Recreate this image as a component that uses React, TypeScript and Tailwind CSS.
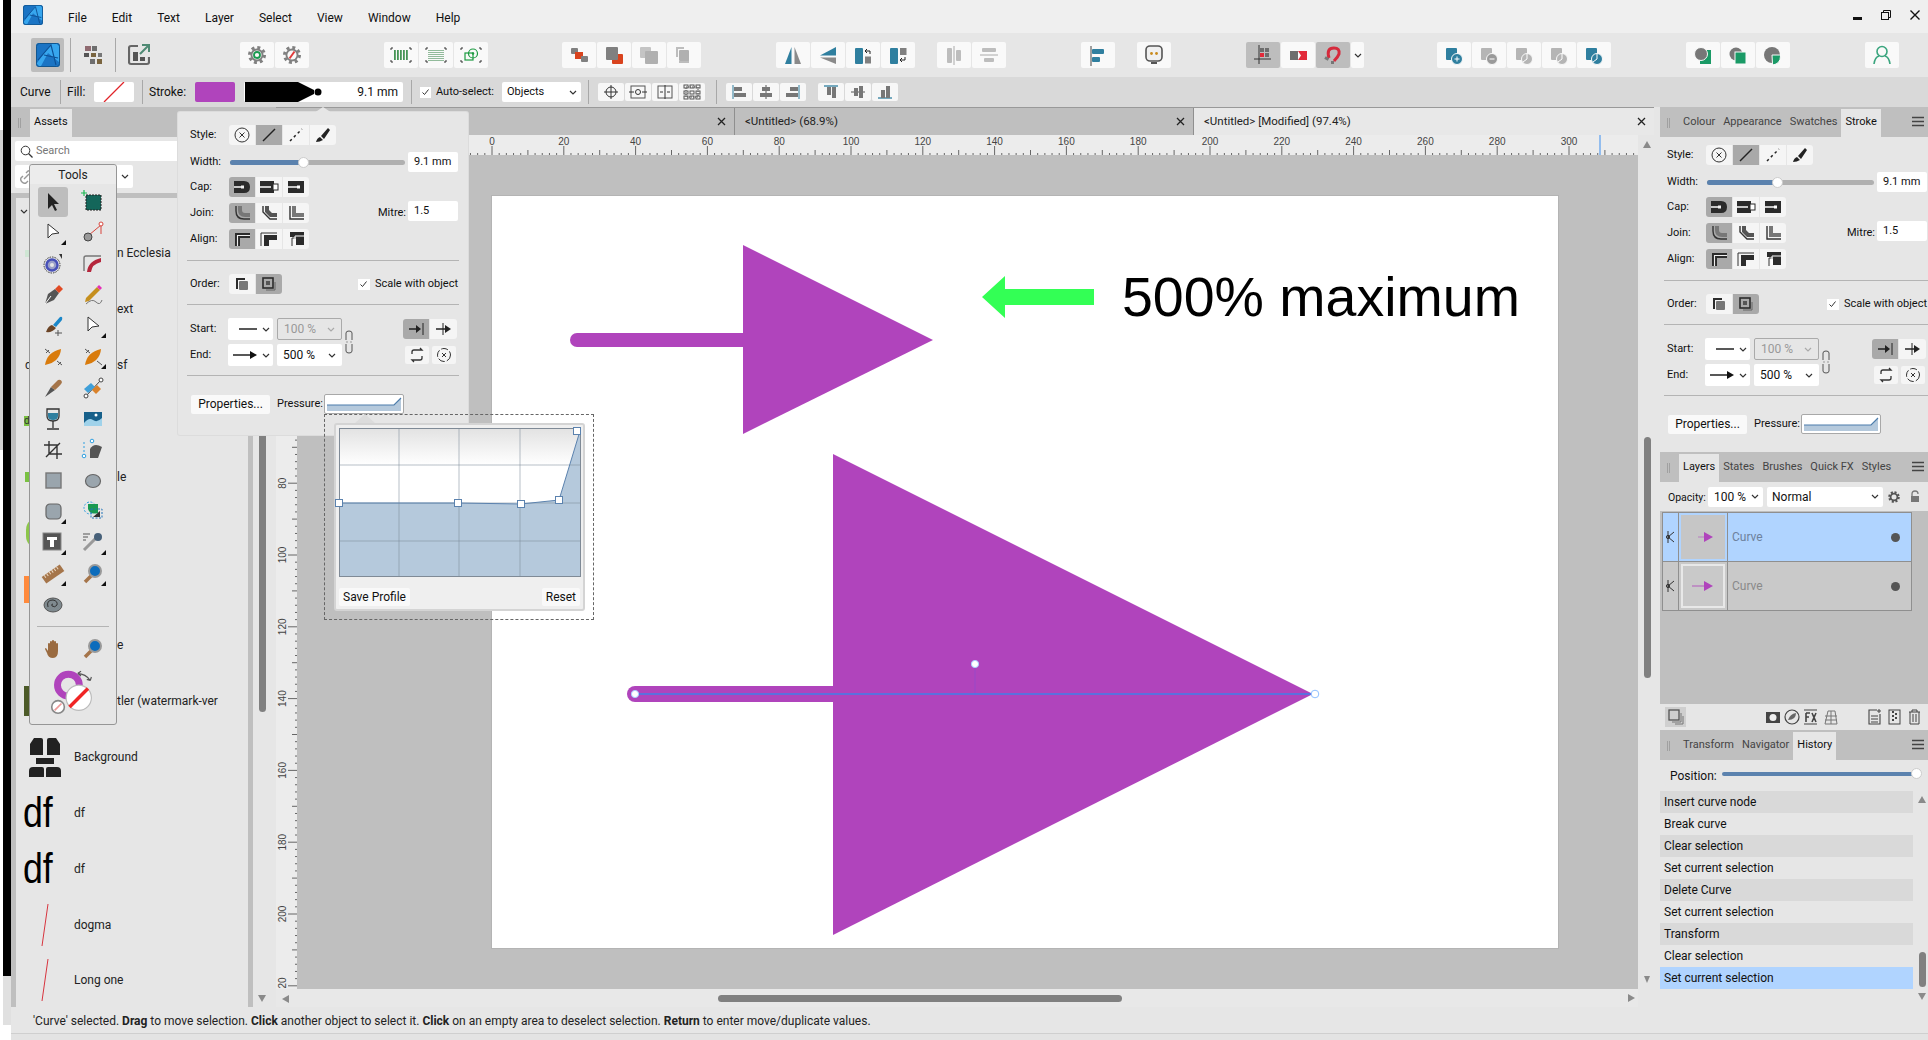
import React from 'react';

const PURPLE = '#b044bc';
const TEAL = '#2f7f9f';
const GRN = '#1a9a66';
const ORG = '#d9431e';

const Svg: React.FC<{ w?: number; h?: number; children?: React.ReactNode }> = ({ w = 34, h = 26, children }) => (
  <svg width={w} height={h} viewBox={`0 0 ${w} ${h}`} className="block shrink-0">{children}</svg>
);

const Chev: React.FC<{ c?: string }> = ({ c = '#333' }) => (
  <svg width="8" height="5" viewBox="0 0 8 5" className="block shrink-0"><path d="M1 1l3 3 3-3" fill="none" stroke={c} strokeWidth="1.2" /></svg>
);

const Logo: React.FC<{ s: number }> = ({ s }) => (
  <svg width={s} height={s} viewBox="0 0 24 24" className="block shrink-0">
    <rect width="24" height="24" rx="3" fill="#1b74c4" />
    <path d="M1 20 L15 1 H21 Q23 1 23 3 V19 L12 10 L5 23 H3 Q1 23 1 21Z" fill="#37a6ee" />
    <path d="M2 17 L15 2 L20 22 M8 12 L22 15" fill="none" stroke="#0d4f94" strokeWidth="1.1" />
    <rect x="0.5" y="0.5" width="23" height="23" rx="3" fill="none" stroke="#12568f" />
  </svg>
);

const Brackets = () => (
  <path d="M9 6H7V8 M25 6h2v2 M9 20H7v-2 M25 20h2v-2" fill="none" stroke="#333" strokeWidth="1" />
);

const Gear: React.FC = () => (
  <g>
    <circle cx="17" cy="13" r="7.5" fill="none" stroke="#808080" strokeWidth="3" strokeDasharray="3 2.9" />
    <circle cx="17" cy="13" r="6.5" fill="#808080" />
    <circle cx="17" cy="13" r="4.6" fill="#f9f9f9" />
  </g>
);

const tb: React.ReactNode[] = [
  <><Gear /><circle cx="17" cy="13" r="3" fill="none" stroke="#1a9a50" strokeWidth="1.8" /></>,
  <><Gear /><path d="M14.5 16.5l5-7" stroke="#e03a3a" strokeWidth="2" /></>,
  <><Brackets />{[11, 14, 17, 20, 23].flatMap(x => [9, 11, 13, 15, 17].map(y => <rect key={`${x}${y}`} x={x - 1} y={y - 0.8} width="1.8" height="1.6" fill="#1b7d2e" />))}</>,
  <><Brackets />{[10, 12, 14, 16, 18, 20, 22, 24].flatMap(x => [8, 10, 12, 14, 16, 18].map(y => <rect key={`${x}${y}`} x={x - 0.5} y={y} width="1" height="1" fill="#2a7d3c" />))}</>,
  <><Brackets /><circle cx="19" cy="11.5" r="4.5" fill="none" stroke="#1b9a40" strokeWidth="1.2" /><rect x="11" y="11" width="8" height="7" fill="none" stroke="#1b9a40" strokeWidth="1.2" /><circle cx="19" cy="11.5" r="1.2" fill="#1b9a40" /></>,
  <><rect x="9" y="6" width="7" height="6" rx="1" fill="#808080" /><rect x="13" y="10" width="8" height="7" fill={ORG} /><rect x="19" y="14" width="7" height="6" rx="1" fill="#808080" /></>,
  <><rect x="15" y="12" width="11" height="10" rx="1" fill={ORG} /><rect x="9" y="5" width="12" height="13" rx="1" fill="#808080" /></>,
  <><rect x="8" y="5" width="11" height="11" rx="1" fill="#c4c4c4" /><rect x="13" y="9" width="13" height="13" rx="1" fill="#b0b0b0" /></>,
  <><path d="M9 5h8v2h-6v8H9z M19 11h3v10H12v-2h8z" fill="#bdbdbd" /><rect x="12" y="8" width="10" height="11" rx="1" fill="#b0b0b0" /></>,
  <><path d="M15.5 5v17H9z" fill={TEAL} /><path d="M18.5 5v17H25z" fill="#8a8a8a" /></>,
  <><path d="M25 5v8.5H9z" fill={TEAL} /><path d="M25 22v-6.5H9z" fill="#8a8a8a" /></>,
  <><rect x="9" y="6" width="8" height="16" rx="1" fill={TEAL} /><rect x="19" y="14.5" width="6" height="7" fill="#808080" /><path d="M21 7l-2 2 2 2 M19 9h5v3" fill="none" stroke="#222" strokeWidth="1" /></>,
  <><rect x="9" y="6" width="8" height="16" rx="1" fill={TEAL} /><rect x="19" y="6" width="6.5" height="7" fill="#808080" /><path d="M21 20l-2-2 2-2 M19 18h5v-3" fill="none" stroke="#222" strokeWidth="1" /></>,
  <><rect x="10" y="6" width="5" height="15" rx="1" fill="#bdbdbd" /><rect x="19" y="8" width="5" height="11" rx="1" fill="#bdbdbd" /><path d="M17 4v19" stroke="#aaa" /></>,
  <><rect x="10" y="6" width="14" height="4" rx="1" fill="#bdbdbd" /><rect x="12" y="16" width="10" height="4" rx="1" fill="#bdbdbd" /><path d="M8 13h18" stroke="#aaa" /></>,
  <><path d="M10 4v20" stroke="#444" /><rect x="11" y="7" width="12" height="5" rx="1" fill={TEAL} /><rect x="11" y="15" width="8" height="5" rx="1" fill={TEAL} /></>,
  <><rect x="9" y="4" width="16" height="15" rx="4" fill="#f0f0f0" stroke="#555" strokeWidth="1.6" /><circle cx="14.5" cy="11.5" r="1.4" fill="#c98a1c" /><circle cx="19.5" cy="11.5" r="1.4" fill="#c98a1c" /><rect x="14" y="20" width="6" height="2" fill="#555" /></>,
  <><rect x="14" y="6" width="4" height="4" fill="#6e6e6e" /><rect x="19" y="6" width="4" height="4" fill="#6e6e6e" /><rect x="14" y="11" width="4" height="4" fill="#e22a3a" /><rect x="19" y="11" width="4" height="4" fill="#6e6e6e" /><path d="M13 3v19 M8 17h17" stroke="#333" /></>,
  <><rect x="9" y="9" width="8" height="9" fill="#6e6e6e" /><path d="M17 9h9v9h-9l3-4.5z" fill="#e22a3a" /></>,
  <><path d="M13 16 Q10 6 18 6 Q24 6 23 12 Q22 15 18 19" fill="none" stroke="#d62a3c" strokeWidth="3" /><rect x="9" y="15" width="4" height="3" fill="#777" transform="rotate(30 11 16)" /><rect x="15" y="19" width="3" height="3" fill="#777" /></>,
];

const bool = (c1: string, c2: string, mark: React.ReactNode): React.ReactNode => (
  <><rect x="9" y="6" width="11" height="12" rx="1" fill={c1} /><circle cx="20" cy="17" r="5.5" fill={c2} stroke="#f9f9f9" />{mark}</>
);

const tb2: React.ReactNode[] = [
  bool(TEAL, TEAL, <path d="M17.5 17h5 M20 14.5v5" stroke="#fff" />),
  bool('#b5b5b5', '#9a9a9a', <path d="M17.5 17h5" stroke="#fff" />),
  bool('#b5b5b5', '#b5b5b5', <path d="M20 12v5l-4 3" fill="none" stroke="#fff" />),
  bool('#b5b5b5', '#b5b5b5', <path d="M20 12v5l-4 3" fill="none" stroke="#fff" />),
  bool(TEAL, TEAL, <path d="M20 12v5l-4 3" fill="none" stroke="#fff" />),
  <><path d="M18 8h7v14H14v-3z" fill={GRN} /><circle cx="15" cy="12" r="6.5" fill="#777" stroke="#f9f9f9" /></>,
  <><circle cx="15" cy="12" r="6.5" fill="#777" /><rect x="14" y="10" width="11" height="12" fill={GRN} stroke="#f9f9f9" /></>,
  <><circle cx="16" cy="13" r="8" fill="#777" /><path d="M16 13h8.5v1q0 8-8 9v-1z" fill={GRN} stroke="#f9f9f9" /></>,
];

const Btn: React.FC<{ on?: boolean; children?: React.ReactNode }> = ({ on, children }) => (
  <div className={`w-[34px] h-[26px] rounded-[2px] flex items-center justify-center ${on ? 'bg-[#bdbdbd]' : 'bg-[#f9f9f9]'}`}>
    <Svg>{children}</Svg>
  </div>
);

const Sep: React.FC<{ className?: string }> = ({ className }) => <div className={`w-px bg-[#a8a8a8] shrink-0 ${className}`} />;

const Toolbar = () => (
  <div className="h-[44px] bg-[#e6e6e6] flex items-center pl-[20px] shrink-0">
    <div className="w-[33px] h-[34px] bg-[#bdbdbd] rounded-[2px] flex items-center justify-center"><Logo s={24} /></div>
    <Sep className="h-[34px] ml-[6px]" />
    <div className="w-[44px] flex justify-center">
      <svg width="20" height="20" viewBox="0 0 20 20" className="block">
        <rect x="2" y="1" width="6" height="5" fill="#8f6a70" /><rect x="9" y="1" width="5" height="5" fill="#6e6e6e" />
        <rect x="1" y="8" width="5" height="4" fill="#555" /><rect x="8" y="8" width="5" height="4" fill="#7a6540" /><rect x="15" y="8" width="4" height="4" fill="#777" />
        <rect x="7" y="14" width="5" height="5" fill="#6e6e6e" /><rect x="14" y="14" width="5" height="5" fill="#7a6540" />
      </svg>
    </div>
    <Sep className="h-[34px]" />
    <div className="w-[46px] flex justify-center">
      <svg width="22" height="22" viewBox="0 0 22 22" className="block">
        <path d="M10 2H3Q1 2 1 4V18Q1 20 3 20H19Q21 20 21 18V13" fill="none" stroke="#666" strokeWidth="2.2" />
        <rect x="5" y="8" width="5" height="9" fill="#555" /><rect x="12" y="13" width="5" height="4" fill="#555" />
        <path d="M12 10L20 2M14 1h7v7" fill="none" stroke="#4f8a74" strokeWidth="2" />
      </svg>
    </div>
    <div className="flex gap-px ml-[78px]"><Btn>{tb[0]}</Btn><Btn>{tb[1]}</Btn></div>
    <div className="flex gap-px ml-[75px]"><Btn>{tb[2]}</Btn><Btn>{tb[3]}</Btn><Btn>{tb[4]}</Btn></div>
    <div className="flex gap-px ml-[74px]"><Btn>{tb[5]}</Btn><Btn>{tb[6]}</Btn><Btn>{tb[7]}</Btn><Btn>{tb[8]}</Btn></div>
    <div className="flex gap-px ml-[75px]"><Btn>{tb[9]}</Btn><Btn>{tb[10]}</Btn><Btn>{tb[11]}</Btn><Btn>{tb[12]}</Btn></div>
    <div className="flex gap-px ml-[22px]"><Btn>{tb[13]}</Btn><Btn>{tb[14]}</Btn></div>
    <div className="ml-[75px]"><Btn>{tb[15]}</Btn></div>
    <div className="ml-[22px]"><Btn>{tb[16]}</Btn></div>
    <div className="flex gap-px ml-[75px]">
      <Btn on>{tb[17]}</Btn><Btn>{tb[18]}</Btn><Btn on>{tb[19]}</Btn>
      <div className="w-[13px] h-[26px] bg-[#f9f9f9] rounded-[2px] flex items-center justify-center"><Chev /></div>
    </div>
    <div className="flex gap-px ml-[73px]">{tb2.slice(0, 5).map((n, i) => <Btn key={i}>{n}</Btn>)}</div>
    <div className="flex gap-px ml-[75px]">{tb2.slice(5).map((n, i) => <Btn key={i}>{n}</Btn>)}</div>
    <div className="ml-[75px]">
      <Btn><circle cx="17" cy="9.5" r="5" fill="none" stroke="#3aa57e" strokeWidth="1.6" /><path d="M9 22 Q10 15 14 14 M25 22 Q24 15 20 14" fill="none" stroke="#3aa57e" strokeWidth="1.6" /></Btn>
    </div>
  </div>
);

const sm: React.ReactNode[] = [
  <><circle cx="13" cy="9" r="5" fill="none" stroke="#333" /><path d="M13 2v14M6 9h14" stroke="#333" /></>,
  <><rect x="6" y="3" width="14" height="12" fill="none" stroke="#555" /><circle cx="13" cy="9" r="2.5" fill="none" stroke="#333" /><path d="M4 9h5M17 9h5" stroke="#333" /></>,
  <><rect x="6" y="3" width="14" height="12" fill="none" stroke="#555" /><path d="M13 2v14 M8 9l3 0 M18 9h-3" stroke="#333" /></>,
  <>{[5, 11, 17].flatMap(x => [2, 8, 13].map(y => <rect key={`${x}${y}`} x={x} y={y} width="4" height="3" fill="none" stroke="#555" />))}<rect x="7" y="4" width="12" height="10" fill="none" stroke="#555" strokeDasharray="1 1" /></>,
  <><path d="M7 2v14" stroke={TEAL} /><rect x="8" y="4" width="8" height="4" fill="#777" /><rect x="8" y="10" width="12" height="4" fill="#777" /></>,
  <><path d="M13 2v14" stroke="#555" /><rect x="9" y="4" width="8" height="4" fill="#777" /><rect x="7" y="10" width="12" height="4" fill="#777" /></>,
  <><path d="M19 2v14" stroke={TEAL} /><rect x="10" y="4" width="8" height="4" fill="#777" /><rect x="6" y="10" width="12" height="4" fill="#777" /></>,
  <><path d="M6 3h14" stroke={TEAL} strokeWidth="1.3" /><rect x="9" y="4" width="4" height="8" fill="#777" /><rect x="14" y="4" width="4" height="11" fill="#777" /></>,
  <><path d="M6 9h14" stroke="#555" /><rect x="9" y="5" width="4" height="8" fill="#777" /><rect x="14" y="3" width="4" height="12" fill="#777" /></>,
  <><path d="M6 15h14" stroke={TEAL} strokeWidth="1.3" /><rect x="9" y="7" width="4" height="8" fill="#777" /><rect x="14" y="3" width="4" height="12" fill="#777" /></>,
];

const SmBtn: React.FC<{ n: React.ReactNode }> = ({ n }) => (
  <div className="w-[26px] h-[18px] bg-[#f7f7f7] rounded-[2px]"><Svg w={26} h={18}>{n}</Svg></div>
);

const ContextBar = () => (
  <div className="h-[30px] bg-[#d9d9d9] flex items-center pl-[9px] text-[12px] shrink-0">
    <span className="w-[30px]">Curve</span>
    <Sep className="h-[24px] ml-[10px]" />
    <span className="w-[27px] ml-[6px]">Fill:</span>
    <div className="w-[40px] h-[20px] bg-white rounded-[2px] overflow-hidden"><Svg w={40} h={20}><path d="M10 20L30 0" stroke="#e1242a" strokeWidth="1.3" /></Svg></div>
    <Sep className="h-[24px] ml-[8px]" />
    <span className="w-[46px] ml-[6px]">Stroke:</span>
    <div className="w-[40px] h-[20px] rounded-[2px] bg-[#b044bc]" />
    <div className="w-[159px] h-[20px] ml-[9px] bg-white rounded-[2px] relative flex items-center justify-end pr-[5px]">
      <div className="absolute left-0 top-0"><Svg w={80} h={20}><path d="M1 0H54L70 8V12L54 20H1Z" fill="#000" /><circle cx="74" cy="10" r="3.5" fill="#000" /></Svg></div>
      <span>9.1 mm</span>
    </div>
    <Sep className="h-[24px] ml-[8px]" />
    <div className="w-[11px] h-[11px] ml-[8px] bg-white flex items-center justify-center"><Svg w={9} h={9}><path d="M1.5 4.5l2 2 4-5" fill="none" stroke="#333" /></Svg></div>
    <span className="w-[66px] ml-[5px] text-[11px]">Auto-select:</span>
    <div className="w-[79px] h-[20px] bg-white rounded-[2px] flex items-center justify-between pl-[5px] pr-[4px] text-[11px]"><span>Objects</span><Chev /></div>
    <Sep className="h-[24px] ml-[7px]" />
    <div className="flex gap-px ml-[9px]">{sm.slice(0, 4).map((n, i) => <SmBtn key={i} n={n} />)}</div>
    <Sep className="h-[24px] ml-[11px]" />
    <div className="flex gap-px ml-[9px]">{sm.slice(4, 7).map((n, i) => <SmBtn key={i} n={n} />)}</div>
    <div className="flex gap-px ml-[12px]">{sm.slice(7).map((n, i) => <SmBtn key={i} n={n} />)}</div>
  </div>
);

const Grip = () => <div className="w-[3px] h-[10px] border-x border-[#a0a0a0] shrink-0" />;

const PanelHead: React.FC<{ tabs: string[]; active: string; menu?: boolean }> = ({ tabs, active, menu = true }) => (
  <div className="h-[30px] bg-[#bfbfbf] flex items-end pl-[7px] pr-[4px] text-[11px] text-[#444] shrink-0 relative whitespace-nowrap">
    <div className="h-[28px] flex items-center w-[12px]"><Grip /></div>
    {tabs.map(t => (
      <div key={t} className={`h-[28px] px-[4px] pb-[2px] flex items-center ${t === active ? 'bg-[#e6e6e6] text-[#111]' : ''}`}>{t}</div>
    ))}
    {menu && (
      <div className="ml-auto h-[28px] flex items-center pb-[3px]">
        <Svg w={12} h={11}><path d="M0 1.5h12M0 5.5h12M0 9.5h12" stroke="#444" strokeWidth="1.6" /></Svg>
      </div>
    )}
  </div>
);

const Seg: React.FC<{ items: React.ReactNode[]; on: number }> = ({ items, on }) => (
  <div className="flex gap-px">
    {items.map((n, i) => (
      <div key={i} className={`w-[26px] h-[20px] ${i === 0 ? 'rounded-l-[3px]' : ''} ${i === items.length - 1 ? 'rounded-r-[3px]' : ''} ${i === on ? 'bg-[#a9a9a9]' : 'bg-[#f5f5f5]'}`}>
        <Svg w={26} h={20}>{n}</Svg>
      </div>
    ))}
  </div>
);

const styleIcons: React.ReactNode[] = [
  <><circle cx="13" cy="10" r="7" fill="none" stroke="#333" /><path d="M10.5 7.5l5 5m0-5l-5 5" stroke="#333" /></>,
  <path d="M7 16L19 4" stroke="#222" strokeWidth="1.5" />,
  <path d="M7 16L19 4" stroke="#222" strokeWidth="1.5" strokeDasharray="2.5 3" />,
  <><path d="M6 17Q7 13 10 12L13 15Q10 17 6 17Z M11 11L18 3L20 5L14 14Z" fill="#222" /></>,
];
const capIcons: React.ReactNode[] = [
  <><path d="M5 4H15Q21 4 21 10T15 16H5Z" fill="#2b2b2b" /><path d="M5 10H14" stroke="#f0f0f0" strokeWidth="1.6" /><rect x="12" y="8.5" width="3" height="3" fill="#f0f0f0" /></>,
  <><path d="M4 4H18V16H4Z" fill="#2b2b2b" /><path d="M4 10H15" stroke="#fff" strokeWidth="1.5" /><rect x="17" y="7" width="5" height="6" fill="#fff" stroke="#2b2b2b" /></>,
  <><path d="M5 4H21V16H5Z" fill="#2b2b2b" /><path d="M5 10H16" stroke="#fff" strokeWidth="1.5" /><rect x="14" y="8.5" width="3" height="3" fill="#fff" /></>,
];
const joinIcons: React.ReactNode[] = [
  <><path d="M7 3V8Q7 16 15 16H21" fill="none" stroke="#333" strokeWidth="1.4" /><path d="M9 3H13V7Q13 10 16 10H21V14H16Q9 14 9 7Z" fill="#777" /></>,
  <><path d="M7 3V9L14 16H21" fill="none" stroke="#333" strokeWidth="1.4" /><path d="M9 3H13V7L16 10H21V14H14L9 9Z" fill="#555" /></>,
  <><path d="M7 3V16H21" fill="none" stroke="#333" strokeWidth="1.4" /><path d="M9 3H13V10H21V14H9Z" fill="#777" /></>,
];
const alignIcons: React.ReactNode[] = [
  <><path d="M6 4H21V9H11V17H6Z" fill="#2b2b2b" /><path d="M8.5 17V6.5H21" fill="none" stroke="#eee" strokeWidth="1.1" /></>,
  <><path d="M5 4H21 M5 4V17" stroke="#333" fill="none" /><path d="M8 6H21V11H13V17H8Z" fill="#2b2b2b" /></>,
  <><path d="M7 3H21V16H13V8H7Z M7 9V17" fill="#2b2b2b" /><path d="M9 17V9H14" fill="none" stroke="#333" /><path d="M12 16V7H21" fill="none" stroke="#fff" strokeWidth="1" /></>,
];
const orderIcons: React.ReactNode[] = [
  <><path d="M7 4H16V6H9V15H7Z" fill="#2b2b2b" /><rect x="10" y="7" width="9" height="9" rx="1" fill="#777" /></>,
  <><rect x="7" y="4" width="10" height="10" fill="none" stroke="#2b2b2b" strokeWidth="1.6" /><rect x="10" y="7" width="4" height="4" fill="#555" /><path d="M19 8V16H10" fill="none" stroke="#666" /></>,
];

const Arrow: React.FC<{ head?: boolean }> = ({ head }) => (
  <Svg w={34} h={22}>
    {head ? <><path d="M5 11H23" stroke="#111" strokeWidth="1.4" /><path d="M22 7L29 11L22 15Z" fill="#111" /></> : <path d="M11 11H29" stroke="#111" strokeWidth="1.4" />}
  </Svg>
);

const Field: React.FC<{ children?: React.ReactNode; className?: string }> = ({ children, className }) => (
  <div className={`w-[50px] h-[20px] bg-white rounded-[2px] flex items-center pl-[6px] ${className ?? ''}`}>{children}</div>
);

const Label: React.FC<{ children?: React.ReactNode }> = ({ children }) => (
  <span className="w-[42px] pl-[3px] shrink-0">{children}</span>
);

const Hr: React.FC<{ className?: string }> = ({ className }) => <div className={`h-px bg-[#b4b4b4] ${className}`} />;

const Pressure = () => (
  <div className="w-[80px] h-[20px] bg-white border border-[#a8a8a8] rounded-[2px]">
    <Svg w={78} h={18}>
      <path d="M2 10H69L76 3V16H2Z" fill="#b5c9dc" /><path d="M2 10H69L76 3" fill="none" stroke="#4d7dab" strokeWidth="1.2" />
    </Svg>
  </div>
);

// same controls are shown docked on the right and in the popover
const StrokePanel = () => (
  <div className="flex flex-col text-[11px] whitespace-nowrap">
    <div className="flex items-center h-[20px]"><Label>Style:</Label><Seg items={styleIcons} on={1} /></div>
    <div className="flex items-center h-[20px] mt-[7px]">
      <Label>Width:</Label>
      <div className="flex-1 h-[5px] bg-[#b0b0b0] rounded-full relative ml-px">
        <div className="w-[41.7%] h-full bg-[#5b82ae] rounded-l-full" />
        <div className="absolute left-[41.7%] top-[-3px] w-[11px] h-[11px] -ml-[5px] rounded-full bg-white border border-[#ccc]" />
      </div>
      <Field className="ml-[3px] mr-px">9.1 mm</Field>
    </div>
    <div className="flex items-center h-[20px] mt-[5px]"><Label>Cap:</Label><Seg items={capIcons} on={0} /></div>
    <div className="flex items-center h-[20px] mt-[6px]">
      <Label>Join:</Label><Seg items={joinIcons} on={0} />
      <span className="ml-auto mr-[2px]">Mitre:</span>
      <Field className="mr-px -translate-y-[2px]">1.5</Field>
    </div>
    <div className="flex items-center h-[20px] mt-[6px]"><Label>Align:</Label><Seg items={alignIcons} on={0} /></div>
    <Hr className="mt-[11px]" />
    <div className="flex items-center h-[20px] mt-[13px]">
      <Label>Order:</Label><Seg items={orderIcons} on={1} />
      <div className="ml-auto w-[12px] h-[11px] bg-white flex items-center justify-center"><Svg w={9} h={9}><path d="M1.5 4.5l2 2 4-5" fill="none" stroke="#333" /></Svg></div>
      <span className="ml-[5px] mr-px">Scale with object</span>
    </div>
    <Hr className="mt-[10px]" />
    <div className="flex mt-[13px] h-[48px]">
      <div className="flex flex-col gap-[4px]">
        <div className="flex items-center h-[22px]">
          <span className="w-[41px] pl-[3px]">Start:</span>
          <div className="w-[45px] h-[22px] bg-white rounded-[2px] flex items-center"><Arrow /><Chev /></div>
          <div className="w-[65px] h-[22px] ml-[4px] border border-[#aaa] rounded-[2px] flex items-center justify-between px-[6px] text-[#999] text-[12px]"><span>100 %</span><Chev c="#aaa" /></div>
        </div>
        <div className="flex items-center h-[22px]">
          <span className="w-[41px] pl-[3px]">End:</span>
          <div className="w-[45px] h-[22px] bg-white rounded-[2px] flex items-center"><Arrow head /><Chev /></div>
          <div className="w-[65px] h-[22px] ml-[4px] bg-white rounded-[2px] flex items-center justify-between px-[6px] text-[12px]"><span>500 %</span><Chev /></div>
        </div>
      </div>
      <div className="ml-[2px] mt-[12px]">
        <Svg w={10} h={24}><path d="M2 10V3Q2 1 5 1T8 3V10M2 14V21Q2 23 5 23T8 21V14" fill="none" stroke="#555" /><path d="M2 12h2M6 12h2" stroke="#999" /></Svg>
      </div>
      <div className="ml-auto mr-[2px] flex flex-col items-end">
        <div className="flex gap-px mt-px">
          <div className="w-[26px] h-[20px] bg-[#a9a9a9] rounded-l-[3px]"><Svg w={26} h={20}><path d="M6 10h10" stroke="#222" strokeWidth="1.5" /><path d="M13 6l5 4-5 4z" fill="#222" /><path d="M20 4v12" stroke="#222" /></Svg></div>
          <div className="w-[27px] h-[20px] bg-[#f5f5f5] rounded-r-[3px]"><Svg w={27} h={20}><path d="M6 10h12" stroke="#222" strokeWidth="1.5" /><path d="M15 6l6 4-6 4z" fill="#222" /><path d="M13 4v12" stroke="#222" /></Svg></div>
        </div>
        <div className="flex gap-[3px] mt-[7px] mr-px">
          <div className="w-[24px] h-[18px] bg-[#f5f5f5] rounded-[2px]"><Svg w={24} h={18}><path d="M7 8V6Q7 4 9 4H17L15 2M17 10V12Q17 14 15 14H7L9 16" fill="none" stroke="#333" strokeWidth="1.3" /></Svg></div>
          <div className="w-[24px] h-[18px] bg-[#f5f5f5] rounded-[2px]"><Svg w={24} h={18}><circle cx="12" cy="9" r="6.5" fill="none" stroke="#333" strokeDasharray="7 2" /><path d="M10 7l4 4m0-4l-4 4" stroke="#333" /></Svg></div>
        </div>
      </div>
    </div>
    <Hr className="mt-[9px]" />
    <div className="flex items-center h-[20px] mt-[18px]">
      <div className="w-[79px] h-[19px] ml-[4px] bg-[#f9f9f9] rounded-[2px] flex items-center justify-center text-[12px]">Properties...</div>
      <span className="ml-[7px] w-[47px]">Pressure:</span>
      <Pressure />
    </div>
  </div>
);

const Thumb: React.FC<{ faint?: boolean }> = ({ faint }) => (
  <Svg w={26} h={16}>
    <path d={faint ? 'M2 8H14' : 'M8 8H14'} stroke={PURPLE} strokeWidth="1.4" opacity={faint ? 0.6 : 0.4} />
    <path d="M14 3L23 8L14 13Z" fill={PURPLE} />
  </Svg>
);

const LayerRow: React.FC<{ on?: boolean }> = ({ on }) => (
  <div className={`h-[49px] flex border-b border-[#8f8f8f] ${on ? 'bg-[#b0d4ff]' : 'bg-[#c9c9c9]'}`}>
    <div className="w-[16px] border-r border-[#8f8f8f] flex items-center justify-center">
      <Svg w={9} h={12}><path d="M2 0v12 M8 1L2 6l6 5" fill="none" stroke="#333" /><circle cx="2" cy="6" r="1.6" fill="none" stroke="#333" /></Svg>
    </div>
    <div className="w-[49px] border-r border-[#8f8f8f] p-[2px] flex">
      <div className={`flex-1 flex items-center justify-center ${on ? 'bg-[#c6c6c6]' : 'bg-[#c9c9c9] border-2 border-[#e8e8e8]'}`}><Thumb faint={!on} /></div>
    </div>
    <div className={`flex-1 flex items-center pl-[4px] text-[12px] ${on ? 'text-[#6d819c]' : 'text-[#8a8a8a]'}`}>Curve</div>
    <div className="w-[9px] h-[9px] rounded-full bg-[#555] self-center mr-[11px]" />
  </div>
);

const history = ['Insert curve node', 'Break curve', 'Clear selection', 'Set current selection', 'Delete Curve', 'Set current selection', 'Transform', 'Clear selection', 'Set current selection'];

const RightPanel = () => (
  <div className="w-[268px] bg-[#e6e6e6] flex flex-col shrink-0 text-[#111]">
    <PanelHead tabs={['Colour', 'Appearance', 'Swatches', 'Stroke']} active="Stroke" />
    <div className="h-[315px] pt-[8px] pl-[4px] shrink-0"><StrokePanel /></div>
    <PanelHead tabs={['Layers', 'States', 'Brushes', 'Quick FX', 'Styles']} active="Layers" />
    <div className="h-[29px] flex items-center pl-[8px] text-[12px] shrink-0">
      <span className="w-[40px] text-[10.5px] pt-[2px]">Opacity:</span>
      <div className="w-[55px] h-[20px] bg-white rounded-[2px] flex items-center justify-between pl-[6px] pr-[4px]"><span>100 %</span><Chev /></div>
      <div className="w-[116px] h-[20px] ml-[4px] bg-white rounded-[2px] flex items-center justify-between pl-[5px] pr-[4px]"><span>Normal</span><Chev /></div>
      <div className="ml-[5px]"><Svg w={12} h={12}><circle cx="6" cy="6" r="4.6" fill="none" stroke="#555" strokeWidth="2.4" strokeDasharray="2 1.6" /><circle cx="6" cy="6" r="3.4" fill="none" stroke="#555" strokeWidth="1.8" /></Svg></div>
      <div className="ml-[10px]"><Svg w={10} h={13}><path d="M2 6V4Q2 1 5 1T8 4" fill="none" stroke="#777" strokeWidth="1.3" /><rect x="1" y="6" width="8" height="6" fill="#777" /></Svg></div>
    </div>
    <div className="h-[193px] bg-[#bfbfbf] pl-[2px] pr-[16px] pt-px shrink-0">
      <div className="border-x border-t border-[#8f8f8f]">
        <LayerRow on />
        <LayerRow />
      </div>
    </div>
    <div className="h-[26px] flex items-center pl-[5px] shrink-0">
      <div className="w-[21px] h-[20px] bg-[#cfcfcf] flex items-center justify-center"><Svg w={16} h={16}><rect x="1" y="1" width="10" height="10" fill="none" stroke="#555" strokeWidth="1.3" /><path d="M13 4V13H4 M15 7V15H7" fill="none" stroke="#777" /></Svg></div>
      <div className="ml-[80px]"><Svg w={14} h={11}><rect width="14" height="11" fill="#444" /><circle cx="7" cy="5.5" r="3.5" fill="#eee" /></Svg></div>
      <div className="ml-[4px]"><Svg w={16} h={16}><circle cx="8" cy="8" r="7" fill="none" stroke="#444" strokeWidth="1.2" /><path d="M4 11Q6 5 12 4Q12 11 4 11Z" fill="#666" /></Svg></div>
      <div className="ml-[4px]"><Svg w={14} h={16}><path d="M0 1h13 M0 15h13" stroke="#444" /><path d="M2 4h4M2 4v9M2 8h3M8 4l4 9M12 4l-4 9" fill="none" stroke="#444" strokeWidth="1.6" /></Svg></div>
      <div className="ml-[6px]"><Svg w={14} h={15}><path d="M4 1h7l2 13H1z M7 1v13 M1 6h12 M1 10h12" fill="none" stroke="#777" /></Svg></div>
      <div className="ml-[30px]"><Svg w={14} h={16}><path d="M9 1H1V15H12V5" fill="none" stroke="#444" strokeWidth="1.1" /><path d="M3 7h7M3 10h7M3 13h7M11 0v4M9 2h4" stroke="#444" /></Svg></div>
      <div className="ml-[6px]"><Svg w={13} h={16}><rect x="1" y="1" width="11" height="14" fill="none" stroke="#444" />{[3, 7, 11].map(y => <rect key={y} x="4" y={y - 1} width="2" height="2" fill="#444" />)}{[5, 9].map(y => <rect key={y} x="7" y={y - 1} width="2" height="2" fill="#444" />)}</Svg></div>
      <div className="ml-[7px]"><Svg w={13} h={16}><path d="M1 3h11M4 3V1h5v2M2 3v12h9V3M5 5v8M8 5v8" fill="none" stroke="#444" /></Svg></div>
    </div>
    <PanelHead tabs={['Transform', 'Navigator', 'History']} active="History" />
    <div className="h-[31px] flex items-center pl-[10px] text-[12px] shrink-0">
      <span className="w-[52px]">Position:</span>
      <div className="w-[192px] h-[4px] bg-[#5b82ae] rounded-full relative -mt-[3px]">
        <div className="absolute right-[-8px] top-[-4px] w-[11px] h-[11px] rounded-full bg-white border border-[#ccc]" />
      </div>
    </div>
    <div className="flex flex-1 min-h-0">
      <div className="w-[253px] text-[12px]">
        {history.map((h, i) => (
          <div key={i} className={`h-[22px] flex items-center pl-[4px] ${i === 8 ? 'bg-[#b0d4ff]' : i % 2 === 0 ? 'bg-[#d9d9d9]' : ''}`}>{h}</div>
        ))}
      </div>
      <div className="flex-1 flex flex-col items-center pl-[3px] pt-[5px]">
        <Svg w={8} h={7}><path d="M4 0L8 7H0Z" fill="#8a8a8a" /></Svg>
        <div className="w-[7px] h-[35px] bg-[#808080] rounded-full mt-[149px]" />
        <div className="mt-[6px]"><Svg w={8} h={7}><path d="M4 7L8 0H0Z" fill="#8a8a8a" /></Svg></div>
      </div>
    </div>
  </div>
);

const HRuler = () => {
  const X = (u: number) => 216 + u * 3.59;
  const us: number[] = [];
  for (let u = -58; u <= 318; u += 2) us.push(u);
  return (
    <svg width="1362" height="20" className="block">
      {us.map(u => {
        const len = u % 20 === 0 ? 9 : u % 10 === 0 ? 5 : 2;
        return <path key={u} d={`M${X(u)} 20V${20 - len}`} stroke="#444" strokeWidth="0.8" />;
      })}
      {us.filter(u => u % 20 === 0 && u >= 0).map(u => (
        <text key={u} x={X(u)} y="9.5" textAnchor="middle" fontSize="10" fill="#444" fontFamily="Liberation Sans, sans-serif">{u}</text>
      ))}
      <path d="M1324 0V20" stroke="#3a8ef0" />
    </svg>
  );
};

const VRuler = () => {
  const Y = (u: number) => 41 + u * 3.59;
  const us: number[] = [];
  for (let u = -10; u <= 222; u += 2) us.push(u);
  return (
    <svg width="21" height="834" className="block">
      {us.map(u => {
        const len = u % 20 === 0 ? 9 : u % 10 === 0 ? 5 : 2;
        return <path key={u} d={`M21 ${Y(u)}H${21 - len}`} stroke="#444" strokeWidth="0.8" />;
      })}
      {us.filter(u => u % 20 === 0 && u >= 0).map(u => (
        <text key={u} transform={`translate(10 ${Y(u)}) rotate(-90)`} textAnchor="middle" fontSize="10" fill="#444" fontFamily="Liberation Sans, sans-serif">{u}</text>
      ))}
    </svg>
  );
};

const DocTab: React.FC<{ title: string; on?: boolean; className?: string }> = ({ title, on, className }) => (
  <div className={`h-full flex items-center justify-between pl-[10px] pr-[8px] ${on ? 'bg-[#e8e8e8]' : 'bg-[#bfbfbf] border-r border-[#8f8f8f]'} ${className}`}>
    <span>{title}</span>
    <Svg w={9} h={9}><path d="M1 1l7 7m0-7l-7 7" stroke="#222" strokeWidth="1.3" /></Svg>
  </div>
);

const DocArea = () => (
  <div className="w-[1378px] flex flex-col shrink-0 text-[11.5px] text-[#222]">
    <div className="h-[28px] flex border-t border-[#999] shrink-0">
      <DocTab title="" className="w-[459px]" />
      <DocTab title="<Untitled> (68.9%)" className="w-[459px]" />
      <DocTab title="<Untitled> [Modified] (97.4%)" on className="w-[460px]" />
    </div>
    <div className="flex-1 flex min-h-0">
      <div className="w-[1362px] flex flex-col shrink-0">
        <div className="h-[20px] bg-[#ececec] shrink-0"><HRuler /></div>
        <div className="h-[834px] flex shrink-0">
          <div className="w-[21px] bg-[#ececec] shrink-0"><VRuler /></div>
          <div className="flex-1 bg-[#bfbfbf] pl-[195px] pt-[41px]">
            <div className="w-[1066px] h-[752px] bg-white relative overflow-hidden shadow-[0_0_0_1px_#b4b4b4]">
              <svg width="1066" height="752" className="absolute left-0 top-0">
                <path d="M85 137H251V151H85A7 7 0 0 1 85 137Z" fill={PURPLE} />
                <path d="M251 49L441 144L251 238Z" fill={PURPLE} />
                <path d="M143 490H341V506H143A8 8 0 0 1 143 490Z" fill={PURPLE} />
                <path d="M341 258L821 498L341 739Z" fill={PURPLE} />
                <path d="M490 101L513 80V93H602V109H513V122Z" fill="#33ff55" />
                <path d="M483 468V498" stroke="#8a4fd0" strokeWidth="0.6" />
                <path d="M143 498H823" stroke="#3f7fe8" strokeWidth="1.5" />
                <circle cx="143" cy="498" r="3.6" fill="#fff" stroke="#a8d0ff" />
                <circle cx="823" cy="498" r="3.8" fill="#fff" stroke="#8fc0ff" />
                <circle cx="483" cy="468" r="3.6" fill="#fff" stroke="#a8d0ff" />
              </svg>
              <div className="absolute left-[630px] top-[71px] text-[55.5px] leading-[60px] text-black font-['Liberation_Sans',sans-serif] whitespace-nowrap">500% maximum</div>
            </div>
          </div>
        </div>
        <div className="h-[18px] bg-[#e8e8e8] flex items-center shrink-0 relative pl-[442px]">
          <div className="absolute left-[6px] top-[6px]"><Svg w={7} h={8}><path d="M7 0V8L0 4Z" fill="#8a8a8a" /></Svg></div>
          <div className="w-[404px] h-[7px] bg-[#808080] rounded-full" />
          <div className="ml-[506px]"><Svg w={7} h={8}><path d="M0 0V8L7 4Z" fill="#8a8a8a" /></Svg></div>
        </div>
      </div>
      <div className="flex-1 bg-[#e6e6e6] flex flex-col items-center pl-[2px] pt-[6px]">
        <Svg w={8} h={7}><path d="M4 0L8 7H0Z" fill="#8a8a8a" /></Svg>
        <div className="w-[7px] h-[241px] bg-[#808080] rounded-full mt-[289px]" />
        <div className="mt-[298px]"><Svg w={6} h={7}><path d="M3 7L6 0H0Z" fill="#8a8a8a" /></Svg></div>
      </div>
    </div>
  </div>
);

const fragments: { label: string; thumb?: React.ReactNode }[] = [
  { label: 'n Ecclesia', thumb: <div className="w-[20px] h-[7px] bg-[#cfe6d4] ml-[9px]" /> },
  { label: 'ext' },
  { label: 'sf', thumb: <span className="ml-[9px] text-[12px]">d</span> },
  { label: '', thumb: <div className="w-[20px] h-[10px] bg-[#7ac142] ml-[8px] text-[10px] leading-[10px] text-[#333]">d</div> },
  { label: 'le', thumb: <div className="w-[20px] h-[10px] bg-[#7ac142] ml-[9px]" /> },
  { label: '', thumb: <div className="w-[26px] h-[32px] rounded-full bg-[#8cc64a] ml-[10px]" /> },
  { label: '', thumb: <div className="w-[20px] h-[27px] bg-[#ff8a3c] ml-[8px]" /> },
  { label: 'e' },
  { label: 'tler (watermark-ver', thumb: <div className="w-[20px] h-[30px] bg-[#4c5a28] ml-[8px]" /> },
];

const AssetList = () => (
  <div className="w-[232px] shrink-0 overflow-hidden text-[12px] text-[#222]">
    <div className="h-[27px] flex items-center pl-[4px]"><Chev /></div>
    {fragments.map((f, i) => (
      <div key={i} className="h-[56px] relative flex items-center">
        <div className="absolute left-0 top-0 h-full flex items-center">{f.thumb}</div>
        <span className="ml-[101px] whitespace-nowrap">{f.label}</span>
      </div>
    ))}
    <div className="h-[56px] flex items-center">
      <div className="w-[58px] flex justify-center">
        <svg width="34" height="42" viewBox="0 0 34 42" className="block">
          <path d="M2 19V8L6 2H13Q15 2 15 4V19Z M32 19V8L28 2H21Q19 2 19 4V19Z" fill="#222" />
          <rect x="8" y="22" width="18" height="6" fill="#222" />
          <path d="M1 41V35Q1 31 5 31H14Q16 31 16 33V41Z M33 41V35Q33 31 29 31H20Q18 31 18 33V41Z" fill="#222" />
        </svg>
      </div>
      <span>Background</span>
    </div>
    {['df', 'df'].map((d, i) => (
      <div key={i} className="h-[56px] flex items-center">
        <div className="w-[58px] pl-[7px]"><div className="text-[42px] leading-[48px] text-black origin-left scale-x-[.85] font-['Liberation_Sans',sans-serif]">{d}</div></div>
        <span>{d}</span>
      </div>
    ))}
    {['dogma', 'Long one'].map(d => (
      <div key={d} className="h-[55px] flex items-center">
        <div className="w-[58px] pl-[25px]"><Svg w={8} h={44}><path d="M7 1L1 43" stroke="#d8353f" strokeWidth="1" /></Svg></div>
        <span>{d}</span>
      </div>
    ))}
  </div>
);

const LeftPanel = () => (
  <div className="w-[265px] flex flex-col bg-[#e6e6e6] shrink-0">
    <PanelHead tabs={['Assets']} active="Assets" menu={false} />
    <div className="h-[56px] pl-[4px] pt-[4px] shrink-0 text-[11px]">
      <div className="w-[230px] h-[20px] bg-white rounded-[2px] flex items-center pl-[5px]">
        <Svg w={13} h={13}><circle cx="5.5" cy="5.5" r="4.3" fill="none" stroke="#333" /><path d="M8.5 8.5L12.5 12.5" stroke="#333" strokeWidth="1.2" /></Svg>
        <span className="ml-[3px] text-[#777]">Search</span>
      </div>
      <div className="w-[118px] h-[23px] mt-[4px] bg-white rounded-[2px] flex items-center justify-between pl-[5px] pr-[4px]">
        <Svg w={14} h={14}><path d="M4 9L9 4M3 6L1 8Q0 10 2 12T6 13L8 11M6 3L8 1Q10 0 12 2T13 6L11 8" fill="none" stroke="#999" strokeWidth="1.4" /></Svg>
        <Chev />
      </div>
    </div>
    <div className="h-[5px] bg-[#bfbfbf] shrink-0" />
    <div className="flex-1 flex min-h-0 overflow-hidden">
      <div className="w-[5px] bg-[#bfbfbf] shrink-0" />
      <AssetList />
      <div className="w-[5px] bg-[#bfbfbf] shrink-0" />
      <div className="flex-1 flex flex-col items-center pr-[5px]">
        <div className="h-[514px] w-[7px] bg-[#808080] rounded-b-full shrink-0" />
        <div className="mt-[283px]"><Svg w={8} h={7}><path d="M4 7L8 0H0Z" fill="#8a8a8a" /></Svg></div>
      </div>
    </div>
  </div>
);

const c = (n: React.ReactNode) => (
  <><path d="M21 25h5v-5z" fill="#111" />{n}</>
);

const toolIcons: React.ReactNode[] = [
  <path d="M8 4V20L12 16L15 22L17 21L14 15H19Z" fill="#222" />,
  <><rect x="6" y="6" width="15" height="15" fill="#14665a" stroke="#222" strokeDasharray="2 1" /><path d="M4 1v6M1 4h6" stroke="#1db954" strokeWidth="1.2" /></>,
  c(<path d="M8 4V18L12 14L19 13Z" fill="#fff" stroke="#333" />),
  <><path d="M9 15L21 5V14" fill="none" stroke="#d8453c" /><circle cx="21" cy="4" r="2" fill="#fff" stroke="#d8453c" /><circle cx="8" cy="17" r="4" fill="#999" stroke="#444" /></>,
  <><circle cx="12" cy="14" r="8" fill="none" stroke="#333" strokeDasharray="1.5 1" /><circle cx="12" cy="14" r="5.5" fill="#9aa0c8" stroke="#4750b8" strokeWidth="2.5" /><circle cx="12" cy="14" r="2" fill="#e6e6e6" /><path d="M19 3L22 3V8Z" fill="#333" /></>,
  <><path d="M4 20V7Q4 5 6 5H21" fill="none" stroke="#777" strokeWidth="1.4" /><path d="M7 21Q8 10 21 7V11Q12 13 11 21Z" fill="#b5263c" /></>,
  <><path d="M5 22L8 12L15 7L19 11L14 18Z" fill="#555" /><path d="M15 7L19 3L23 7L19 11Z" fill="#e14a24" /><path d="M5 22L11 14" stroke="#fff" /></>,
  <><path d="M6 16L17 5L20 8L9 19L5 20Z" fill="#c58f1e" /><path d="M17 5L19 3L22 6L20 8Z" fill="#e62eb8" /><path d="M6 22Q12 16 16 20T22 18" fill="none" stroke="#777" /></>,
  <><path d="M13 12L20 4Q23 3 22 7L16 14Z" fill="#1b87c9" /><path d="M6 19Q8 13 12 12L16 15Q12 20 6 19Z" fill="#6b4426" /><path d="M18 17v6M15 20h7" stroke="#555" /></>,
  c(<path d="M8 4V18L12 14L19 13Z" fill="#fff" stroke="#333" />),
  <><path d="M5 21Q7 8 21 5Q20 18 5 21Z" fill="#d97b0c" /><path d="M5 5l5 4M6 9l3-3M17 17l5 4M18 21l3-3" stroke="#555" /></>,
  c(<><path d="M5 21Q7 8 21 5Q20 18 5 21Z" fill="#d97b0c" /><path d="M5 5l5 4M6 9l3-3M17 17l5 4" stroke="#555" /></>),
  <><path d="M5 22L11 12L15 15Z" fill="#555" /><path d="M11 12L18 5Q21 4 22 7Q22 9 15 15Z" fill="#a5754a" /></>,
  <><path d="M6 21L21 5" stroke="#444" /><circle cx="6" cy="21" r="2" fill="#fff" stroke="#444" /><circle cx="21" cy="5" r="2" fill="#fff" stroke="#444" /><path d="M4 14L11 8L15 12L8 18Z" fill="#3f9fd8" /><path d="M12 15L17 10L21 14L16 19Z" fill="#d9822b" /></>,
  <><path d="M7 3V10Q7 15 13 15T19 10V3Z" fill="none" stroke="#333" strokeWidth="1.3" /><path d="M8 7H18V10Q18 14 13 14T8 10Z" fill="#2f7f9f" /><path d="M13 15V22M7 23H19" stroke="#333" strokeWidth="1.3" /></>,
  <><rect x="4" y="6" width="18" height="14" fill="#17608a" /><path d="M4 17Q9 11 13 14T22 12V20H4Z" fill="#9fd2ea" /><circle cx="16" cy="9" r="1.5" fill="#fff" /></>,
  <><path d="M9 4V17H22 M4 8H17V22 M6 20L20 6" fill="none" stroke="#333" strokeWidth="1.4" /></>,
  <><path d="M10 12Q14 5 22 10L18 21H10Z" fill="#555" /><path d="M4 5V18" stroke="#2f9fe0" strokeDasharray="2 2" /><circle cx="4" cy="19" r="1.8" fill="#fff" stroke="#2f9fe0" /><circle cx="12" cy="4" r="1.8" fill="#fff" stroke="#2f9fe0" /></>,
  <rect x="6" y="5" width="15" height="15" fill="#9aa5ad" stroke="#777" strokeWidth="1.4" />,
  <ellipse cx="13" cy="13" rx="7.5" ry="6.5" fill="#9aa5ad" stroke="#666" strokeWidth="1.2" />,
  c(<rect x="6" y="5" width="15" height="15" rx="4" fill="#9aa5ad" stroke="#666" strokeWidth="1.2" />),
  <><circle cx="10" cy="9" r="6" fill="none" stroke="#2f9fe0" strokeDasharray="2 1.5" /><path d="M8 5H18V14Q10 16 8 10Z" fill="#189a52" /><rect x="11" y="10" width="11" height="9" fill="none" stroke="#2073b8" strokeDasharray="2 1.5" /><path d="M13 18L20 12V18Z" fill="#333" /></>,
  c(<><rect x="3" y="3" width="18" height="17" fill="#555" stroke="#888" /><path d="M7 7H17V10H14V17H10V10H7Z" fill="#fff" /></>),
  c(<><path d="M4 20L16 8" stroke="#999" strokeWidth="3" /><circle cx="18" cy="7" r="4" fill="#476079" /><path d="M3 4h7M3 7h5M3 10h3" stroke="#555" /></>),
  c(<g transform="rotate(-35 13 13)"><rect x="2" y="9" width="22" height="8" fill="#a5754a" /><path d="M5 9v3M8 9v3M11 9v3M14 9v3M17 9v3M20 9v3" stroke="#ead8c2" /></g>),
  c(<><path d="M5 21L11 15" stroke="#a5754a" strokeWidth="3.5" /><circle cx="15" cy="10" r="6" fill="#0c6cbc" stroke="#999" strokeWidth="2" /></>),
  <><ellipse cx="13" cy="13" rx="9" ry="7" fill="#7f8a8f" stroke="#555" /><path d="M8 15Q6 8 13 8Q18 9 17 13Q15 16 12 14Q11 12 13 12" fill="none" stroke="#333" /></>,
  <><path d="M8 15V8a1 1 0 012 0V6a1 1 0 012 0V5a1 1 0 012 0V6a1 1 0 012 0V8a1 1 0 012 0V15Q18 22 13 22T7 17L5 13Q5 12 6 12Z" fill="#9a6b40" /></>,
  <><path d="M5 21L11 15" stroke="#a5754a" strokeWidth="3.5" /><circle cx="15" cy="10" r="6" fill="#0c6cbc" stroke="#999" strokeWidth="2" /></>,
];

const ToolCell: React.FC<{ on?: boolean; n: React.ReactNode }> = ({ on, n }) => (
  <div className={`w-[30px] h-[30px] rounded-[3px] flex items-center justify-center ${on ? 'bg-[#bdbdbd]' : ''}`}><Svg w={26} h={26}>{n}</Svg></div>
);

const ToolsPalette = () => (
  <div className="absolute left-[18px] top-[164px] w-[88px] h-[561px] bg-[#e6e6e6] border border-[#969696] rounded-[3px] text-[12px] text-[#222] z-10">
    <div className="h-[19px] bg-[#ececec] flex items-center justify-center rounded-t-[3px]">Tools</div>
    <div className="grid grid-cols-[30px_30px] justify-center gap-x-[10px] gap-y-px pt-[3px]">
      {toolIcons.slice(0, 27).map((n, i) => <ToolCell key={i} on={i === 0} n={n} />)}
    </div>
    <div className="h-px bg-[#b4b4b4] mx-[7px] mt-[6px]" />
    <div className="grid grid-cols-[30px_30px] justify-center gap-x-[10px] pt-[7px]">
      {toolIcons.slice(27).map((n, i) => <ToolCell key={i} n={n} />)}
    </div>
    <div className="flex justify-center mt-[5px]">
      <svg width="46" height="46" viewBox="0 0 40 40" className="block">
        <circle cx="16" cy="14" r="9.5" fill="none" stroke={PURPLE} strokeWidth="6" />
        <circle cx="25" cy="25" r="11" fill="#fff" stroke="#bbb" /><path d="M17 33L33 17" stroke="#f02525" strokeWidth="3" />
        <circle cx="7" cy="33" r="5.5" fill="#fff" stroke="#888" strokeWidth="1.4" /><path d="M4 36L10 30" stroke="#e99" strokeWidth="1.5" />
        <path d="M24 4Q31 4 35 10 M24 4l3-2M24 4l3 2 M35 10l-3-1M35 10l1-3" fill="none" stroke="#555" />
      </svg>
    </div>
  </div>
);

const ProfileGraph = () => {
  const pts = [[0, 75], [119, 75], [182, 76], [220, 72], [241, 3]];
  return (
    <svg width="242" height="149" viewBox="0 0 242 149" className="block mx-auto overflow-visible">
      <defs>
        <linearGradient id="top" x1="0" y1="0" x2="0" y2="1"><stop offset="0" stopColor="#e2e2e2" /><stop offset="1" stopColor="#fff" /></linearGradient>
      </defs>
      <rect width="242" height="37" fill="url(#top)" />
      <rect y="37" width="242" height="112" fill="#fff" />
      <path d="M0 75H119L182 76L220 72L241 3V149H0Z" fill="#b5c9dc" />
      <path d="M60 0V149M120 0V149M181 0V149M0 37H242M0 75H242M0 113H242" stroke="#7d8c99" strokeOpacity="0.55" />
      <path d="M0 75H119L182 76L220 72L241 3" fill="none" stroke="#5b82ae" />
      <rect x="0.5" y="0.5" width="241" height="148" fill="none" stroke="#7f8a96" />
      {pts.map(([x, y], i) => <rect key={i} x={Math.min(x, 238) - 3.5} y={y - 3.5} width="7" height="7" fill="#fff" stroke="#5b82ae" />)}
    </svg>
  );
};

const StrokePopover = () => (
  <>
    <div className="absolute left-[167px] top-[112px] w-[290px] h-[323px] bg-[#e6e6e6] rounded-[2px] shadow-[0_0_0_1px_#dcdcdc] pt-[13px] pl-[9px] pr-[9px] z-10">
      <div className="absolute left-[136px] top-[-5px] w-0 h-0 border-x-[9px] border-x-transparent border-b-[6px] border-b-[#e6e6e6]" />
      <StrokePanel />
    </div>
    <div className="absolute left-[313px] top-[414px] w-[270px] h-[206px] border border-dashed border-[#666] z-20">
      <div className="absolute left-[30px] top-[-1px] w-0 h-0 border-x-[10px] border-x-transparent border-b-[9px] border-b-[#dcdcdc]" />
      <div className="absolute left-[9px] top-[8px] w-[251px] h-[188px] bg-[#efefef] border-2 border-[#d4d4d4] rounded-[3px] pt-[3px] text-[12px]">
        <ProfileGraph />
        <div className="flex justify-between px-[3px] mt-[11px]">
          <div className="h-[18px] px-[4px] bg-[#f9f9f9] flex items-center rounded-[2px]">Save Profile</div>
          <div className="h-[18px] px-[4px] bg-[#f9f9f9] flex items-center rounded-[2px]">Reset</div>
        </div>
      </div>
    </div>
  </>
);

export default function App() {
  return (
    <div className="w-[1928px] h-[1040px] flex overflow-hidden bg-white font-['Roboto',sans-serif] text-[#111] relative">
      <div className="w-[3px] flex flex-col shrink-0">
        <div className="h-[130px] bg-white" />
        <div className="h-[320px] bg-[#d0d0d0]" />
        <div className="flex-1 bg-white" />
      </div>
      <div className="w-[8px] flex flex-col shrink-0">
        <div className="h-[976px] bg-black" />
        <div className="h-[49px] bg-[#e0e0e0]" />
        <div className="flex-1 bg-white" />
      </div>
      <div className="flex-1 flex flex-col relative min-w-0">
        <div className="h-[33px] bg-[#efefef] flex items-center pl-[12px] pb-[3px] text-[12px] relative shrink-0">
          <Logo s={20} />
          <div className="flex gap-[25px] ml-[25px] mt-[6px]">
            {['File', 'Edit', 'Text', 'Layer', 'Select', 'View', 'Window', 'Help'].map(m => <span key={m}>{m}</span>)}
          </div>
          <div className="ml-auto flex items-center gap-[19px] pr-[8px]">
            <div className="w-[9px] h-[3px] bg-[#111] mt-[6px]" />
            <Svg w={10} h={10}><path d="M2.5 2.5V0.5H9.5V7.5H7.5" fill="none" stroke="#111" /><rect x="0.5" y="2.5" width="7" height="7" fill="none" stroke="#111" /></Svg>
            <Svg w={10} h={10}><path d="M0.5 0.5l9 9m0-9l-9 9" stroke="#111" strokeWidth="1.4" /></Svg>
          </div>
        </div>
        <Toolbar />
        <ContextBar />
        <div className="flex-1 flex min-h-0 bg-[#e6e6e6]">
          <LeftPanel />
          <DocArea />
          <div className="w-[6px] shrink-0" />
          <RightPanel />
        </div>
        <div className="h-[26px] bg-[#e6e6e6] flex items-center pl-[22px] pt-px text-[12px] text-[#222] shrink-0 whitespace-nowrap">
          <span>'Curve' selected. <b>Drag</b> to move selection. <b>Click</b> another object to select it. <b>Click</b> on an empty area to deselect selection. <b>Return</b> to enter move/duplicate values.</span>
        </div>
        <div className="h-[7px] bg-[#e3e3e3] border-t border-[#cfcfcf] shrink-0" />
        <ToolsPalette />
        <StrokePopover />
      </div>
    </div>
  );
}
